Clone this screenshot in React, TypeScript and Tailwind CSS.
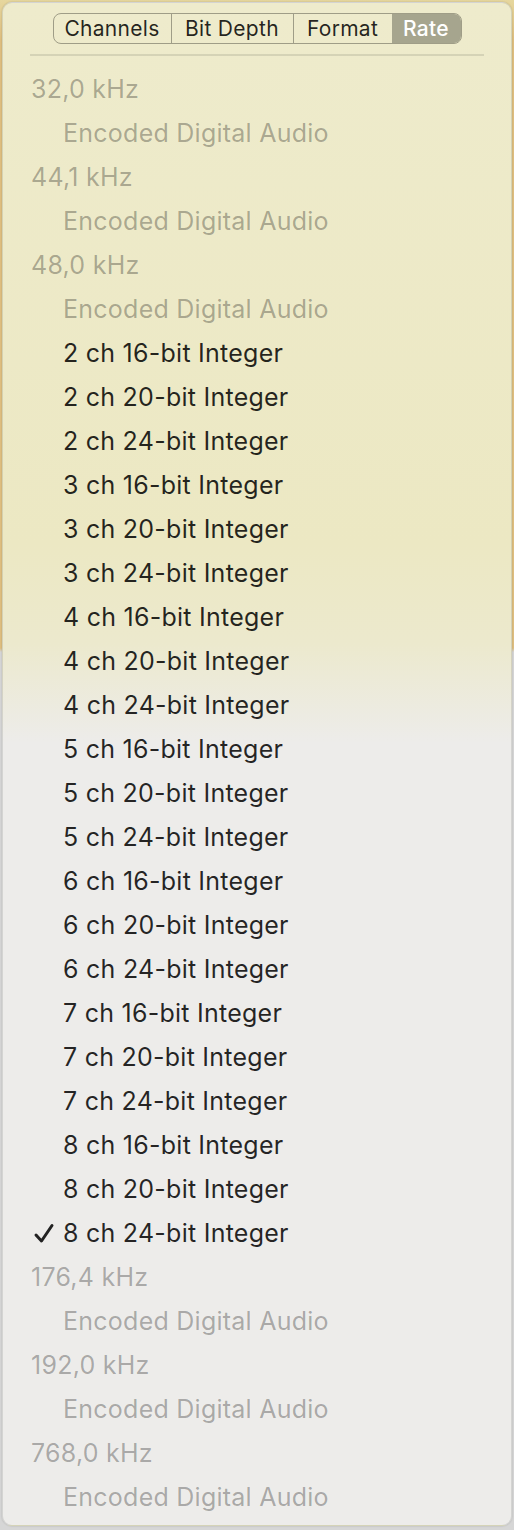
const rates = [
  { label: "32,0 kHz", sub: "Encoded Digital Audio" },
  { label: "44,1 kHz", sub: "Encoded Digital Audio" },
  { label: "48,0 kHz", sub: "Encoded Digital Audio", formats: true },
  { label: "176,4 kHz", sub: "Encoded Digital Audio" },
  { label: "192,0 kHz", sub: "Encoded Digital Audio" },
  { label: "768,0 kHz", sub: "Encoded Digital Audio" },
]

const formats: string[] = []
for (const ch of [2, 3, 4, 5, 6, 7, 8]) {
  for (const bits of [16, 20, 24]) formats.push(`${ch} ch ${bits}-bit Integer`)
}

const tabs = [
  { name: "Channels", w: "w-[118px]", sep: true },
  { name: "Bit Depth", w: "w-[122px]", sep: true },
  { name: "Format", w: "w-[98px]", sep: false },
  { name: "Rate", w: "w-[69px]", sep: false },
]

function Check() {
  return (
    <svg width="22" height="22" viewBox="0 0 22 22" className="absolute left-[30px] top-[11px]">
      <path d="M3 12 L8.5 18 L19 2.5" fill="none" stroke="#222" strokeWidth="3" strokeLinecap="round" strokeLinejoin="round" />
    </svg>
  )
}

function Row({ text, indent, disabled, checked }: { text: string; indent?: boolean; disabled?: boolean; checked?: boolean }) {
  return (
    <div className={`relative h-[44px] flex items-center ${indent ? "pl-[60px]" : "pl-[28px]"} ${disabled ? "text-black/30" : "text-black/85"}`}>
      {checked && <Check />}
      <span>{text}</span>
    </div>
  )
}

export default function App() {
  return (
    <div className="w-[514px] h-[1530px] overflow-hidden p-[2px] bg-[linear-gradient(to_bottom,#e6d79e_0,#dfbf80_40px,#dfbf80_648px,#d6d6d6_652px,#d6d6d6_100%)] font-['Inter','Liberation_Sans',sans-serif] antialiased">
      <div className="h-[1524px] rounded-[10px] border border-black/10 bg-[linear-gradient(to_bottom,#eeebcc_0,#ece8c3_540px,#ece9cd_640px,#edecea_740px,#edecea_100%)] shadow-[0_0_2px_rgba(0,0,0,0.2)]">
        <div className="pt-[10px] flex justify-center">
          <div className="flex h-[31px] rounded-[8px] border-[1.5px] border-[#9f9d87] overflow-hidden text-[21px] tracking-[0.3px] text-black/85">
            {tabs.map((t) => (
              <div
                key={t.name}
                className={`${t.w} flex items-center justify-center ${t.sep ? "border-r-[1.5px] border-[#9f9d87]" : ""} ${t.name === "Rate" ? "bg-[#a6a58e] text-white font-medium" : ""}`}
              >
                {t.name}
              </div>
            ))}
          </div>
        </div>
        <div className="mx-[27px] mt-[10px] h-[2px] bg-black/10" />
        <div className="mt-[12px] text-[25px] tracking-[0.25px]">
          {rates.map((r) => (
            <div key={r.label}>
              <Row text={r.label} disabled />
              <Row text={r.sub} indent disabled />
              {r.formats && formats.map((f) => <Row key={f} text={f} indent checked={f === "8 ch 24-bit Integer"} />)}
            </div>
          ))}
        </div>
      </div>
    </div>
  )
}
